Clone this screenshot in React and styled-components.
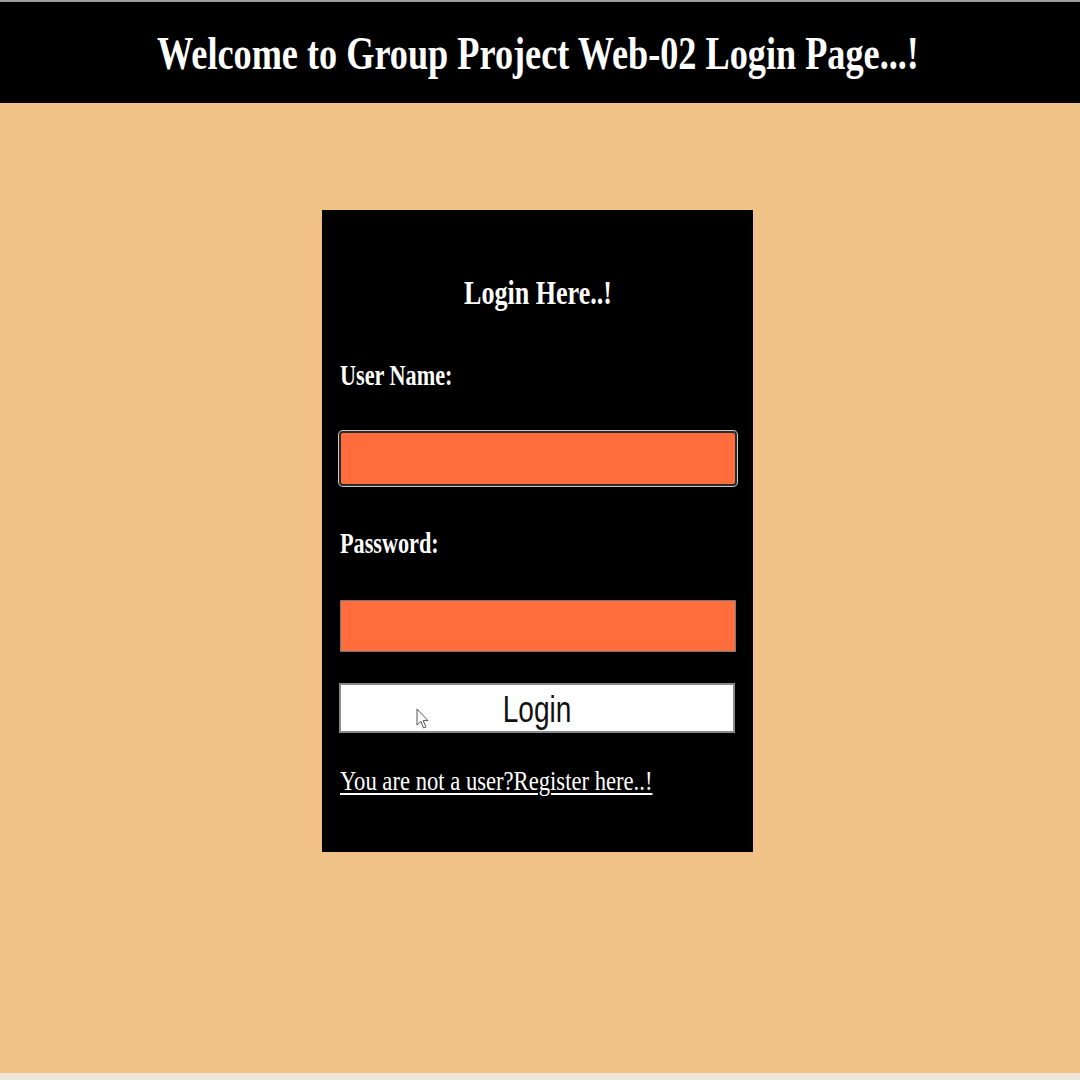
import React from 'react'
import styled, { createGlobalStyle } from 'styled-components'

const GlobalStyle = createGlobalStyle`
  html, body {
    margin: 0;
    padding: 0;
    background: #efe6da;
  }
  * {
    box-sizing: border-box;
  }
`

const Page = styled.div`
  width: 1080px;
  min-height: 1080px;
  display: flex;
  flex-direction: column;
`

const Header = styled.header`
  height: 103px;
  background: #000;
  border-top: 2px solid #9c9c9c;
  padding: 28px 4px 0 0;
`

const HeaderTitle = styled.h1`
  margin: 0;
  color: #fff;
  font-family: "Liberation Serif", "Times New Roman", serif;
  font-weight: bold;
  font-size: 47px;
  line-height: 1;
  text-align: center;
  transform: scaleX(0.771);
  transform-origin: center;
  white-space: nowrap;
`

const Main = styled.main`
  height: 970px;
  background: #f0c287;
  padding: 107px 0 0 322px;
`

const Card = styled.form`
  width: 431px;
  height: 642px;
  background: #000;
  padding: 67px 17px 0 18px;
  display: flex;
  flex-direction: column;
`

const CardTitle = styled.h2`
  margin: 0 0 50px;
  color: #fff;
  font-family: "Liberation Serif", "Times New Roman", serif;
  font-weight: bold;
  font-size: 33px;
  line-height: 1;
  text-align: center;
  transform: scaleX(0.79);
  transform-origin: center;
`

const Label = styled.label`
  display: block;
  margin: 0 0 ${({ $gap }) => $gap}px;
  color: #fff;
  font-family: "Liberation Serif", "Times New Roman", serif;
  font-weight: bold;
  font-size: 30px;
  line-height: 1;
  transform: scaleX(0.74);
  transform-origin: left;
  white-space: nowrap;
`

const Input = styled.input`
  display: block;
  width: ${({ $focused }) => ($focused ? 398 : 396)}px;
  height: ${({ $focused }) => ($focused ? 55 : 52)}px;
  margin: 0 0 ${({ $gap }) => $gap}px ${({ $focused }) => ($focused ? -1 : 0)}px;
  background: #ff6d3c;
  border: ${({ $focused }) => ($focused ? '2px solid #2a2a2a' : '1px solid #777')};
  border-radius: ${({ $focused }) => ($focused ? 4 : 0)}px;
  box-shadow: ${({ $focused }) => ($focused ? '0 0 0 1px #c9c9c9' : 'none')};
  outline: none;
  padding: 0 4px;
  font-size: 20px;
`

const ButtonWrap = styled.div`
  position: relative;
  margin: 0 0 34px -1px;
`

const LoginButton = styled.button`
  display: block;
  width: 396px;
  height: 50px;
  background: #fff;
  border: 2px solid #8a8a8a;
  padding: 3px 0 0;
  cursor: default;
`

const ButtonText = styled.span`
  display: block;
  color: #111;
  font-family: "Liberation Sans", Arial, sans-serif;
  font-size: 36px;
  line-height: 1;
  transform: scaleX(0.78);
  transform-origin: center;
`

const Pointer = styled.svg`
  position: absolute;
  left: 77px;
  top: 25px;
  width: 13px;
  height: 22px;
  pointer-events: none;
`

const RegisterLink = styled.a`
  display: block;
  color: #fff;
  font-family: "Liberation Serif", "Times New Roman", serif;
  font-size: 28px;
  line-height: 1;
  text-decoration: underline;
  text-decoration-thickness: 2px;
  text-underline-offset: 3px;
  transform: scaleX(0.808);
  transform-origin: left;
  white-space: nowrap;
`

const App = () => {
  return (
    <Page>
      <GlobalStyle />
      <Header>
        <HeaderTitle>Welcome to Group Project Web-02 Login Page...!</HeaderTitle>
      </Header>
      <Main>
        <Card onSubmit={(e) => e.preventDefault()}>
          <CardTitle>Login Here..!</CardTitle>
          <Label $gap={41} htmlFor="username">User Name:</Label>
          <Input id="username" type="text" $focused $gap={42} />
          <Label $gap={42} htmlFor="password">Password:</Label>
          <Input id="password" type="password" $gap={31} />
          <ButtonWrap>
            <LoginButton type="submit">
              <ButtonText>Login</ButtonText>
            </LoginButton>
            <Pointer viewBox="0 0 13 22">
              <path
                d="M1 1 L1 17 L4.8 13.4 L7.6 20 L10 19 L7.2 12.6 L12 12.6 Z"
                fill="#fff"
                stroke="#555"
                strokeWidth="1"
                strokeLinejoin="round"
              />
            </Pointer>
          </ButtonWrap>
          <RegisterLink href="#register">You are not a user?Register here..!</RegisterLink>
        </Card>
      </Main>
    </Page>
  )
}

export default App
